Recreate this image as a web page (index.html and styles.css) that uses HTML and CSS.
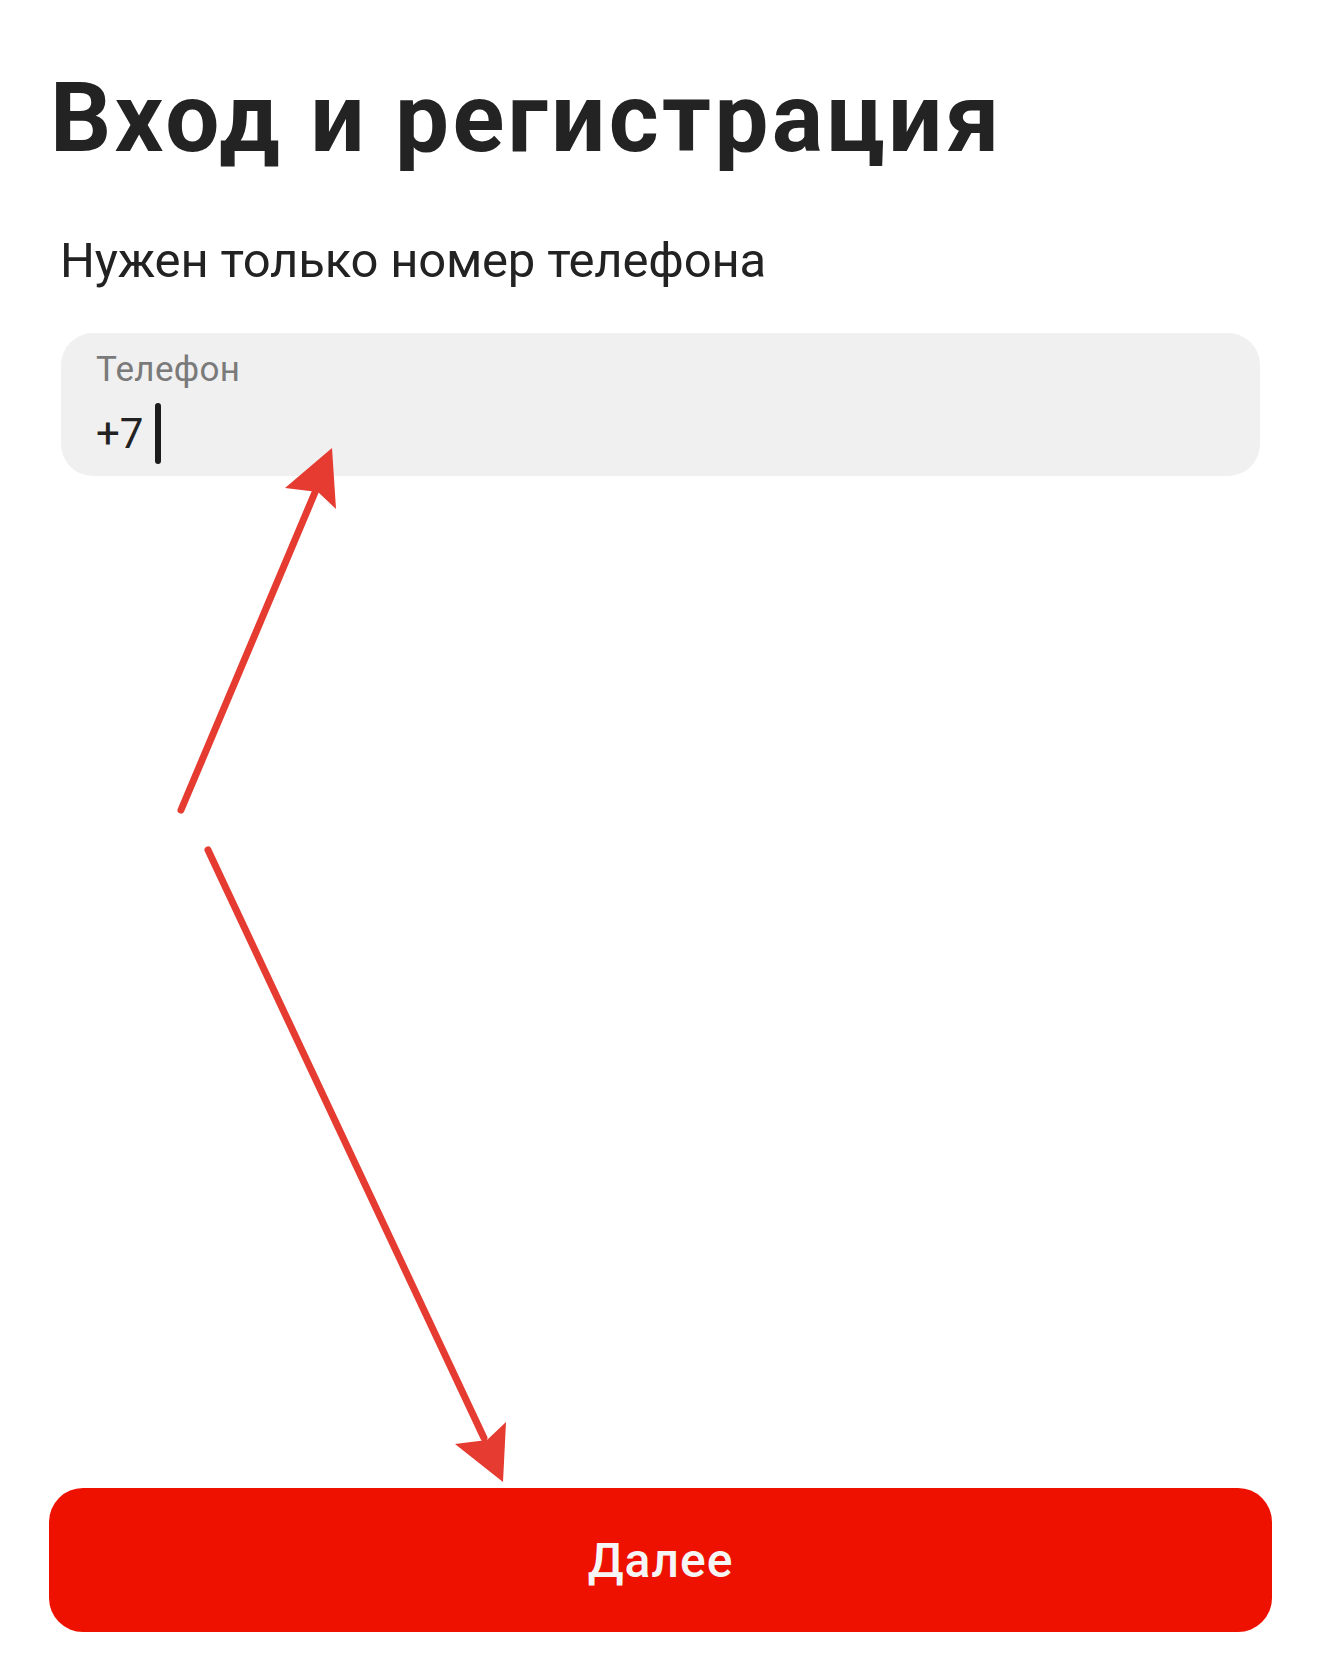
FILE: index.html
```html
<!DOCTYPE html>
<html lang="ru">
<head>
<meta charset="utf-8">
<title>Вход и регистрация</title>
<link rel="stylesheet" href="styles.css">
</head>
<body>
<main class="screen">
  <h1 class="title">Вход и регистрация</h1>
  <p class="subtitle">Нужен только номер телефона</p>
  <div class="field">
    <div class="field-label">Телефон</div>
    <div class="field-value"><span>+7</span><span class="caret"></span></div>
  </div>
  <button class="next-btn" type="button">Далее</button>
  <svg class="arrows" width="1320" height="1653" viewBox="0 0 1320 1653" aria-hidden="true">
    <g stroke="#e53b30" stroke-width="7" stroke-linecap="round" fill="none">
      <line x1="181" y1="810" x2="316" y2="490"/>
      <line x1="208" y1="850" x2="484" y2="1438"/>
    </g>
    <g fill="#e53b30">
      <polygon points="332,448 336,509 318,492 285,488"/>
      <polygon points="503,1482 455,1444 487,1440 506,1422"/>
    </g>
  </svg>
</main>
</body>
</html>
```

FILE: styles.css
```css
html, body {
  margin: 0;
  padding: 0;
  background: #ffffff;
}

.screen {
  position: relative;
  box-sizing: border-box;
  width: 1320px;
  height: 1653px;
  display: flex;
  flex-direction: column;
  font-family: Roboto, "Noto Sans", sans-serif;
  color: #222222;
  overflow: hidden;
}

.title {
  margin: 63px 0 0 50px;
  font-size: 96px;
  line-height: 110px;
  font-weight: 700;
  letter-spacing: 3.3px;
  color: #232323;
}

.subtitle {
  margin: 60px 0 0 60px;
  font-size: 49px;
  line-height: 56px;
  font-weight: 400;
  letter-spacing: -0.2px;
  color: #222222;
}

.field {
  box-sizing: border-box;
  margin: 44px 60px 0 61px;
  height: 143px;
  border-radius: 32px;
  background: #f0f0f0;
  padding: 15px 0 0 35px;
}

.field-label {
  font-size: 35px;
  line-height: 44px;
  letter-spacing: 0.3px;
  color: #7a7a7a;
}

.field-value {
  display: flex;
  align-items: center;
  margin-top: 11px;
  font-size: 42px;
  line-height: 60px;
  color: #222222;
}

.caret {
  width: 6px;
  height: 61px;
  margin-left: 12px;
  border-radius: 3px;
  background: #1c1c1c;
}

.next-btn {
  margin: auto 48px 21px 49px;
  height: 144px;
  border: 0;
  border-radius: 34px;
  background: #ee1100;
  color: #f5f5f5;
  font-family: Roboto, "Noto Sans", sans-serif;
  font-size: 48px;
  font-weight: 500;
  letter-spacing: 1px;
  cursor: pointer;
}

.arrows {
  position: absolute;
  left: 0;
  top: 0;
  pointer-events: none;
}
```
